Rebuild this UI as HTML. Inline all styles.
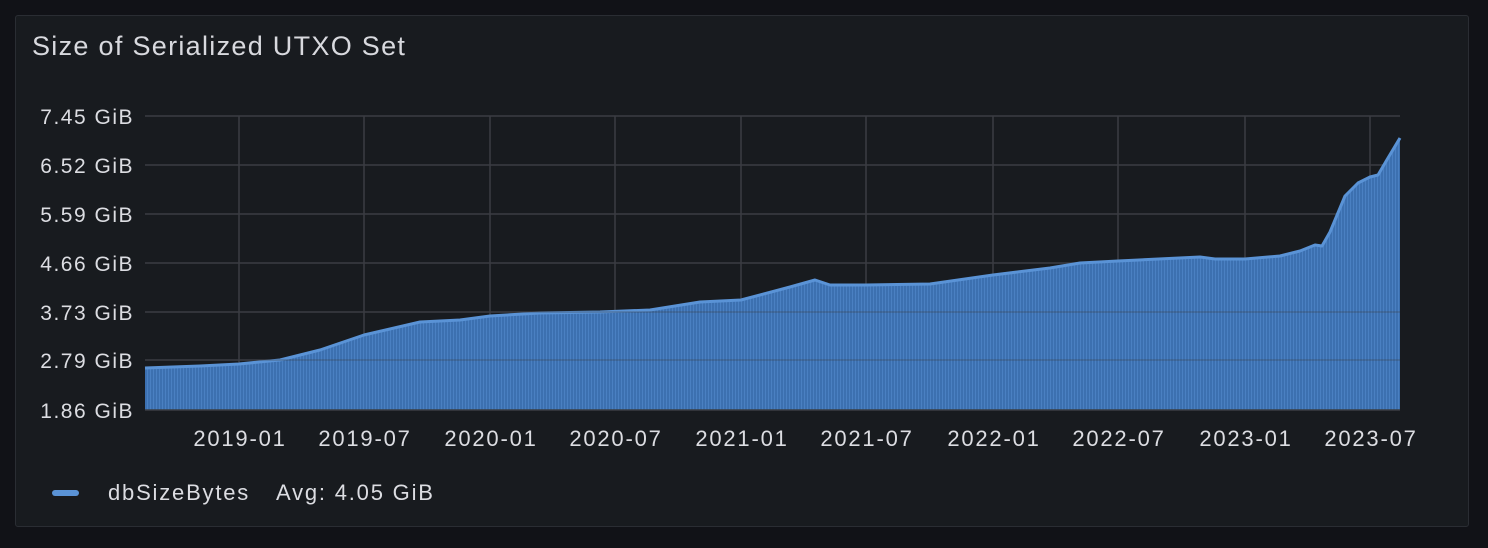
<!DOCTYPE html>
<html><head><meta charset="utf-8"><style>
html,body{margin:0;padding:0;background:#111217;width:1488px;height:548px;overflow:hidden;font-family:"Liberation Sans",sans-serif;}
.panel{position:absolute;left:15px;top:15px;width:1454px;height:512px;background:#181b1f;border:1px solid #2a2d33;border-radius:3px;box-sizing:border-box;}
.t{position:absolute;color:#d8d9de;}
</style></head><body>
<div class="panel"></div>
<div class="t" style="left:32px;top:31px;font-size:27px;letter-spacing:1.3px;">Size of Serialized UTXO Set</div>
<svg width="1488" height="548" style="position:absolute;left:0;top:0">
<defs><pattern id="st" width="3" height="10" patternUnits="userSpaceOnUse"><rect width="3" height="10" fill="#3c70b0"/><rect width="1" height="10" fill="#4a80c2"/></pattern></defs>
<g stroke="#3a3d43" stroke-width="1.5">
<line x1="145" y1="116" x2="1400" y2="116"/><line x1="145" y1="165" x2="1400" y2="165"/><line x1="145" y1="214" x2="1400" y2="214"/><line x1="145" y1="263" x2="1400" y2="263"/><line x1="145" y1="312" x2="1400" y2="312"/><line x1="145" y1="360" x2="1400" y2="360"/>
<line x1="239" y1="116" x2="239" y2="410"/><line x1="364" y1="116" x2="364" y2="410"/><line x1="490" y1="116" x2="490" y2="410"/><line x1="615" y1="116" x2="615" y2="410"/><line x1="741" y1="116" x2="741" y2="410"/><line x1="866" y1="116" x2="866" y2="410"/><line x1="993" y1="116" x2="993" y2="410"/><line x1="1118" y1="116" x2="1118" y2="410"/><line x1="1245" y1="116" x2="1245" y2="410"/><line x1="1370" y1="116" x2="1370" y2="410"/>
</g>
<path d="M145,368 L200,366 L239,364 L280,360 L320,350 L364,335 L420,322 L460,320 L490,316 L540,313 L600,312 L650,310 L700,302 L741,300 L790,287 L815,280 L830,285 L866,285 L930,284 L993,275 L1050,268 L1080,263 L1118,261 L1200,257 L1215,259 L1245,259 L1280,256 L1300,251 L1315,245 L1322,246 L1330,232 L1345,196 L1358,183 L1370,177 L1378,175 L1388,158 L1400,138 L1400,410 L145,410 Z" fill="url(#st)"/>
<path d="M145,368 L200,366 L239,364 L280,360 L320,350 L364,335 L420,322 L460,320 L490,316 L540,313 L600,312 L650,310 L700,302 L741,300 L790,287 L815,280 L830,285 L866,285 L930,284 L993,275 L1050,268 L1080,263 L1118,261 L1200,257 L1215,259 L1245,259 L1280,256 L1300,251 L1315,245 L1322,246 L1330,232 L1345,196 L1358,183 L1370,177 L1378,175 L1388,158 L1400,138" fill="none" stroke="#5a93d6" stroke-width="3" stroke-linejoin="round"/>
<g stroke="#3a3d43" stroke-width="1" opacity="0.5"><line x1="145" y1="312" x2="1400" y2="312"/><line x1="145" y1="360" x2="1400" y2="360"/></g>
<line x1="145" y1="410" x2="1400" y2="410" stroke="#3a3d43" stroke-width="1.5"/>
<g fill="#dcdde2" font-size="21" letter-spacing="1.5" font-family="Liberation Sans,sans-serif" text-anchor="end">
<text x="134" y="124">7.45 GiB</text><text x="134" y="173">6.52 GiB</text><text x="134" y="222">5.59 GiB</text><text x="134" y="271">4.66 GiB</text><text x="134" y="320">3.73 GiB</text><text x="134" y="368">2.79 GiB</text><text x="134" y="418">1.86 GiB</text>
</g>
<g fill="#dcdde2" font-size="22" letter-spacing="1.8" font-family="Liberation Sans,sans-serif" text-anchor="middle">
<text x="240" y="446">2019-01</text><text x="365" y="446">2019-07</text><text x="491" y="446">2020-01</text><text x="616" y="446">2020-07</text><text x="742" y="446">2021-01</text><text x="867" y="446">2021-07</text><text x="994" y="446">2022-01</text><text x="1119" y="446">2022-07</text><text x="1246" y="446">2023-01</text><text x="1371" y="446">2023-07</text>
</g>
<rect x="52" y="490" width="27" height="6" rx="3" fill="#5a93d6"/>
<g fill="#dcdde2" font-size="22" letter-spacing="1.8" font-family="Liberation Sans,sans-serif">
<text x="108" y="500">dbSizeBytes</text><text x="276" y="500">Avg: 4.05 GiB</text>
</g>
</svg>
</body></html>
